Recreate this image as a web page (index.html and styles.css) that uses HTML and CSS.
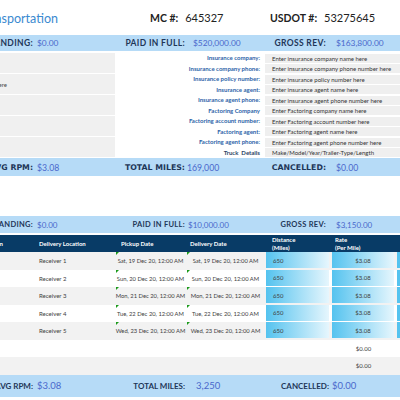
FILE: index.html
```html
<!DOCTYPE html>
<html>
<head>
<meta charset="utf-8">
<link rel="stylesheet" href="styles.css">
</head>
<body>
<div class="sheet">
  <header class="title-row">
    <div class="title">Transportation</div>
    <div class="id"><b>MC #:</b><span>645327</span></div>
    <div class="id"><b>USDOT #:</b><span>53275645</span></div>
  </header>

  <div class="band band1">
    <div class="lab">OUTSTANDING:</div><div class="val">$0.00</div>
    <div class="lab">PAID IN FULL:</div><div class="val">$520,000.00</div>
    <div class="lab">GROSS REV:</div><div class="val">$163,800.00</div>
  </div>

  <section class="info">
    <div class="boxes">
      <div class="box"></div>
      <div class="box"><span>Enter physical address here</span></div>
      <div class="box"></div>
      <div class="box"></div>
      <div class="box"></div>
    </div>
    <div class="fields">
      <div class="flab">Insurance company:</div><div class="fval">Enter insurance company name here</div>
      <div class="flab">Insurance company phone:</div><div class="fval">Enter insurance company phone number here</div>
      <div class="flab">Insurance policy number:</div><div class="fval">Enter insurance policy number here</div>
      <div class="flab">Insurance agent:</div><div class="fval">Enter insurance agent name here</div>
      <div class="flab">Insurance agent phone:</div><div class="fval">Enter insurance agent phone number here</div>
      <div class="flab">Factoring Company</div><div class="fval">Enter Factoring company name here</div>
      <div class="flab">Factoring account number:</div><div class="fval">Enter Factoring account number here</div>
      <div class="flab">Factoring agent:</div><div class="fval">Enter Factoring agent name here</div>
      <div class="flab">Factoring agent phone:</div><div class="fval">Enter Factoring agent phone number here</div>
      <div class="flab truck">Truck&nbsp; Details</div><div class="fval">Make/Model/Year/Trailer-Type/Length</div>
    </div>
  </section>

  <div class="band band2">
    <div class="lab">AVG RPM:</div><div class="val">$3.08</div>
    <div class="lab">TOTAL MILES:</div><div class="val">169,000</div>
    <div class="lab">CANCELLED:</div><div class="val">$0.00</div>
  </div>

  <div class="band band3">
    <div class="lab">OUTSTANDING:</div><div class="val">$0.00</div>
    <div class="lab">PAID IN FULL:</div><div class="val">$10,000.00</div>
    <div class="lab">GROSS REV:</div><div class="val">$3,150.00</div>
  </div>

  <div class="table">
    <div class="row head">
      <div class="c clip">Pickup Location</div>
      <div class="c">Delivery Location</div>
      <div class="c">Pickup Date</div>
      <div class="c">Delivery Date</div>
      <div class="c two">Distance<br>(Miles)</div>
      <div class="c two">Rate<br>(Per Mile)</div>
      <div class="c"></div>
    </div>
    <div class="row alt">
      <div class="c"></div><div class="c">Receiver 1</div>
      <div class="c date flag">Sat, 19 Dec 20, 12:00 AM</div>
      <div class="c date flag">Sat, 19 Dec 20, 12:00 AM</div>
      <div class="c bar">650</div><div class="c bar ctr">$3.08</div><div class="c bar"></div>
    </div>
    <div class="row">
      <div class="c"></div><div class="c">Receiver 2</div>
      <div class="c date flag">Sun, 20 Dec 20, 12:00 AM</div>
      <div class="c date flag">Sun, 20 Dec 20, 12:00 AM</div>
      <div class="c bar">650</div><div class="c bar ctr">$3.08</div><div class="c bar"></div>
    </div>
    <div class="row alt">
      <div class="c"></div><div class="c">Receiver 3</div>
      <div class="c date flag">Mon, 21 Dec 20, 12:00 AM</div>
      <div class="c date flag">Mon, 21 Dec 20, 12:00 AM</div>
      <div class="c bar">650</div><div class="c bar ctr">$3.08</div><div class="c bar"></div>
    </div>
    <div class="row">
      <div class="c"></div><div class="c">Receiver 4</div>
      <div class="c date flag">Tue, 22 Dec 20, 12:00 AM</div>
      <div class="c date flag">Tue, 22 Dec 20, 12:00 AM</div>
      <div class="c bar">650</div><div class="c bar ctr">$3.08</div><div class="c bar"></div>
    </div>
    <div class="row alt">
      <div class="c"></div><div class="c">Receiver 5</div>
      <div class="c date flag">Wed, 23 Dec 20, 12:00 AM</div>
      <div class="c date flag">Wed, 23 Dec 20, 12:00 AM</div>
      <div class="c bar">650</div><div class="c bar ctr">$3.08</div><div class="c bar"></div>
    </div>
    <div class="row">
      <div class="c"></div><div class="c"></div><div class="c"></div><div class="c"></div>
      <div class="c"></div><div class="c ctr">$0.00</div><div class="c"></div>
    </div>
    <div class="row alt">
      <div class="c"></div><div class="c"></div><div class="c"></div><div class="c"></div>
      <div class="c"></div><div class="c ctr">$0.00</div><div class="c"></div>
    </div>
  </div>

  <div class="band band4">
    <div class="lab">AVG RPM:</div><div class="val">$3.08</div>
    <div class="lab">TOTAL MILES:</div><div class="val">3,250</div>
    <div class="lab">CANCELLED:</div><div class="val">$0.00</div>
  </div>
</div>
</body>
</html>
```

FILE: styles.css
```css
* { box-sizing: border-box; margin: 0; padding: 0; }
html, body { width: 400px; height: 400px; overflow: hidden; background: #fff; }
body { font-family: Lato, "Open Sans", sans-serif; color: #333; }

.sheet { width: 400px; }

/* title row */
.title-row {
  height: 35px;
  display: grid;
  grid-template-columns: 150px 120px 130px;
  align-items: center;
}
.title {
  display: flex;
  justify-content: flex-end;
  white-space: nowrap;
  padding-right: 92px;
  font-size: 12.5px;
  color: #3a8ad0;
  margin-top: 2px;
}
.id { display: flex; align-items: baseline; gap: 7px; color: #222; white-space: nowrap; }
.id b { font-size: 10.5px; font-weight: 700; }
.id span { font-size: 11px; }

/* summary bands */
.band {
  display: grid;
  grid-template-columns: 33px 91px 61px 80px 61px 74px;
  align-items: center;
  background: #b6dbf7;
}
.band .lab {
  display: flex;
  justify-content: flex-end;
  white-space: nowrap;
  font-weight: 700;
  color: #1e3657;
  font-size: 7.5px;
  letter-spacing: 0.3px;
}
.band .val { white-space: nowrap; color: #4a68cc; font-size: 8px; padding-left: 4px; }
.band .val:nth-child(4) { padding-left: 8px; }
.band .val:nth-child(6) { padding-left: 10px; }

.band1 { height: 16px; }
.band1 .lab { font-size: 8.5px; letter-spacing: 0.35px; }
.band1 .val { font-size: 8.4px; }
.band2 { height: 18px; }
.band2 .lab { font-family: "DejaVu Sans", Verdana, sans-serif; font-size: 7.8px; letter-spacing: 0; }
.band2 .val { font-size: 8.7px; }
.band2 .val:nth-child(4) { padding-left: 2px; }
.band3 { height: 17px; margin-top: 40px; }
.band3 .val:nth-child(4) { padding-left: 3px; }
.band4 { height: 22px; }
.band4 .lab { font-size: 8px; letter-spacing: 0; }
.band4 .val { font-size: 9.5px; }
.band4 .lab:nth-child(5) { margin-right: -3px; }
.band4 .val:nth-child(4) { padding-left: 11px; }
.band4 .val:nth-child(6) { padding-left: 6px; }

/* info block */
.info { display: flex; margin-top: 2px; height: 105px; }
.boxes {
  width: 115px;
  flex: none;
  display: grid;
  grid-template-columns: 115px;
  grid-template-rows: repeat(5, 21px);
}
.box {
  background: #f0f0f0;
  margin-bottom: 1px;
  min-width: 0;
  display: flex;
  align-items: center;
  justify-content: flex-end;
  white-space: nowrap;
  padding-right: 108px;
  font-size: 6px;
  color: #444;
}
.fields {
  flex: 1;
  display: grid;
  grid-template-columns: 150px 1fr;
  grid-auto-rows: 10.5px;
}
.flab {
  text-align: right;
  padding-right: 5px;
  font-size: 6px;
  font-weight: 700;
  color: #2d63a8;
  white-space: nowrap;
  line-height: 10px;
}
.flab.truck { color: #2b3f66; }
.fval {
  background: #efefef;
  margin: 0.75px 0;
  padding-left: 7px;
  font-size: 6px;
  color: #333;
  white-space: nowrap;
  line-height: 9px;
}

/* table */
.table { margin-top: 2px; }
.row {
  display: grid;
  grid-template-columns: 35px 80px 71px 79px 66px 65px 4px;
  height: 17.5px;
  background: #fff;
}
.row.alt { background: #f2f2f2; }
.row.head { height: 17px; background: #083b66; color: #fff; font-weight: 700; }
.c {
  display: flex;
  align-items: center;
  white-space: nowrap;
  font-size: 6px;
  color: #404040;
  padding-left: 4px;
  position: relative;
  min-width: 0;
}
.head .c { color: #fff; font-size: 6px; }
.head .c:nth-child(3) { padding-left: 6px; }
.head .c:nth-child(5) { padding-left: 7px; }
.head .c:nth-child(6) { padding-left: 4px; }
.head .c.two { line-height: 8px; }
.c.clip { justify-content: flex-end; padding-right: 32px; padding-left: 0; }
.c.date { justify-content: center; padding-left: 0; font-size: 5.8px; }
.c.ctr { justify-content: center; padding-left: 0; }
.c.bar {
  background: linear-gradient(to right, #55c3ef, #e6f6fd);
  margin: 0 2px 1.5px 1px;
  padding-left: 7px;
}
.c.bar.ctr { padding-left: 0; }
.row .c:last-child.bar { margin-right: 0; background: #55c3ef; }
.c.flag::before {
  content: "";
  position: absolute;
  left: 1px;
  top: 0;
  border-top: 3px solid #1b9a1b;
  border-right: 3px solid transparent;
}
```
